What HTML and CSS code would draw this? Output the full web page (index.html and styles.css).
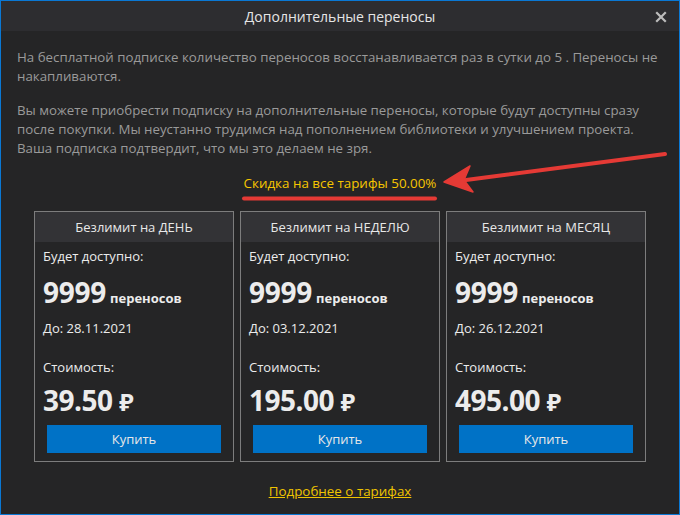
FILE: index.html
```html
<!DOCTYPE html>
<html lang="ru">
<head>
<meta charset="utf-8">
<title>Дополнительные переносы</title>
<link rel="stylesheet" href="styles.css">
</head>
<body>
<div class="window">
  <div class="titlebar">
    <div class="title">Дополнительные переносы</div>
    <svg class="close" width="12" height="12" viewBox="0 0 12 12"><path d="M2 2 L10 10 M10 2 L2 10" stroke="#bcbcbc" stroke-width="2.2" stroke-linecap="square"/></svg>
  </div>
  <div class="content">
    <p class="intro">На бесплатной подписке количество переносов восстанавливается раз в сутки до 5 . Переносы не<br>накапливаются.</p>
    <p class="intro second">Вы можете приобрести подписку на дополнительные переносы, которые будут доступны сразу<br>после покупки. Мы неустанно трудимся над пополнением библиотеки и улучшением проекта.<br>Ваша подписка подтвердит, что мы это делаем не зря.</p>
    <div class="discount-row"><span class="discount">Скидка на все тарифы 50.00%</span></div>
    <div class="cards">
      <div class="card">
        <div class="card-head">Безлимит на ДЕНЬ</div>
        <div class="card-body">
          <div class="label">Будет доступно:</div>
          <div class="amount"><span class="num">9999</span> <span class="unit">переносов</span></div>
          <div class="date">До: 28.11.2021</div>
          <div class="label cost">Стоимость:</div>
          <div class="price">39.50 <span class="rub">₽</span></div>
          <div class="buy">Купить</div>
        </div>
      </div>
      <div class="card">
        <div class="card-head">Безлимит на НЕДЕЛЮ</div>
        <div class="card-body">
          <div class="label">Будет доступно:</div>
          <div class="amount"><span class="num">9999</span> <span class="unit">переносов</span></div>
          <div class="date">До: 03.12.2021</div>
          <div class="label cost">Стоимость:</div>
          <div class="price">195.00 <span class="rub">₽</span></div>
          <div class="buy">Купить</div>
        </div>
      </div>
      <div class="card">
        <div class="card-head">Безлимит на МЕСЯЦ</div>
        <div class="card-body">
          <div class="label">Будет доступно:</div>
          <div class="amount"><span class="num">9999</span> <span class="unit">переносов</span></div>
          <div class="date">До: 26.12.2021</div>
          <div class="label cost">Стоимость:</div>
          <div class="price">495.00 <span class="rub">₽</span></div>
          <div class="buy">Купить</div>
        </div>
      </div>
    </div>
    <div class="more-row"><a class="more" href="#">Подробнее о тарифах</a></div>
  </div>
  <svg class="annot" width="680" height="515" viewBox="0 0 680 515">
    <path d="M244 198.5 L435 198.5" stroke="#e53a35" stroke-width="4" stroke-linecap="round"/>
    <path d="M665 154 L466 180" stroke="#e53a35" stroke-width="4" stroke-linecap="round"/>
    <path d="M444 182 L470 166 L464 180 L473 192 Z" fill="#e53a35" stroke="#e53a35" stroke-width="1.5" stroke-linejoin="round"/>
  </svg>
</div>
</body>
</html>
```

FILE: styles.css
```css
* { box-sizing: border-box; }
html, body { margin: 0; padding: 0; }
body {
  background: #252526;
  font-family: "Open Sans", "Noto Sans", "DejaVu Sans", sans-serif;
}
.window {
  position: relative;
  width: 680px;
  height: 515px;
  border: 1px solid #0a78d4;
  background: #252526;
  display: flex;
  flex-direction: column;
}
.titlebar {
  height: 30px;
  background: #2d2d30;
  display: flex;
  align-items: center;
  justify-content: center;
  position: relative;
}
.title {
  color: #e6e6e6;
  font-size: 14px;
}
.close {
  position: absolute;
  right: 12px;
  top: 10px;
}
.content {
  padding: 0 16px;
  flex: 1;
  display: flex;
  flex-direction: column;
}
.intro {
  margin: 17px 0 0 0;
  color: #9a9a9a;
  font-size: 13.3px;
  line-height: 19px;
  white-space: nowrap;
}
.intro.second { margin-top: 15px; }
.discount-row {
  display: flex;
  justify-content: center;
  margin-top: 16px;
}
.discount {
  color: #f7c600;
  font-size: 13.4px;
  line-height: 19px;
}
.cards {
  display: flex;
  justify-content: center;
  gap: 6px;
  margin-top: 18px;
}
.card {
  width: 200px;
  height: 251px;
  border: 1px solid #7d7d7d;
  display: flex;
  flex-direction: column;
}
.card-head {
  height: 30px;
  background: #333336;
  color: #e8e8e8;
  font-size: 13px;
  display: flex;
  align-items: center;
  justify-content: center;
}
.card-body {
  padding: 5px 8px 0 8px;
  color: #ececec;
}
.label {
  font-size: 13px;
  line-height: 19px;
}
.amount {
  margin-top: 11px;
  line-height: 30px;
  font-weight: 700;
  white-space: nowrap;
}
.num { font-size: 28px; letter-spacing: -0.3px; }
.unit { font-size: 13px; }
.date {
  margin-top: 6px;
  font-size: 13px;
  line-height: 19px;
}
.cost { margin-top: 20px; }
.price {
  margin-top: 8px;
  font-size: 28px;
  font-weight: 700;
  line-height: 30px;
  letter-spacing: -0.5px;
}
.rub { font-size: 24px; }
.buy {
  margin: 8px 4px 0 4px;
  height: 28px;
  background: #0072c6;
  color: #e8e8e8;
  font-size: 13px;
  display: flex;
  align-items: center;
  justify-content: center;
}
.more-row {
  display: flex;
  justify-content: center;
  margin-top: 20px;
}
.more {
  color: #f0c400;
  font-size: 13.4px;
  line-height: 19px;
  text-decoration: underline;
}
.annot {
  position: absolute;
  left: -1px;
  top: -1px;
  pointer-events: none;
}
```
